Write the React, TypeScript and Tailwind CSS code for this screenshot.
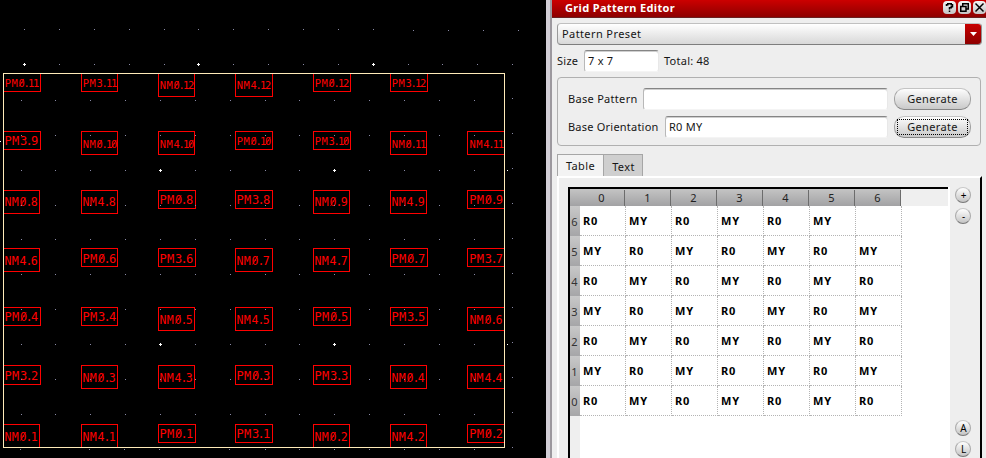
import type { ReactNode } from "react";

const COLS = [
  { left: 3, pm: 40, nm: 39 },
  { left: 81, pm: 117, nm: 117 },
  { left: 158, pm: 195, nm: 194 },
  { left: 235, pm: 272, nm: 272 },
  { left: 313, pm: 350, nm: 349 },
  { left: 390, pm: 427, nm: 426 },
  { left: 467, pm: 504, nm: 504 },
];

const DEVICE_ROWS = [
  { top: 73, pm: 91, nm: 96, pmBase: 86.5, nmBase: 88.5, names: ["PM0.11", "PM3.11", "NM0.12", "NM4.12", "PM0.12", "PM3.12"] },
  { top: 131, pm: 149, nm: 154, pmBase: 144.5, nmBase: 147.5, names: ["PM3.9", "NM0.10", "NM4.10", "PM0.10", "PM3.10", "NM0.11", "NM4.11"] },
  { top: 190, pm: 208, nm: 213, pmBase: 204, nmBase: 206, names: ["NM0.8", "NM4.8", "PM0.8", "PM3.8", "NM0.9", "NM4.9", "PM0.9"] },
  { top: 248, pm: 266, nm: 271, pmBase: 262.5, nmBase: 264.5, names: ["NM4.6", "PM0.6", "PM3.6", "NM0.7", "NM4.7", "PM0.7", "PM3.7"] },
  { top: 307, pm: 325, nm: 330, pmBase: 321, nmBase: 323.5, names: ["PM0.4", "PM3.4", "NM0.5", "NM4.5", "PM0.5", "PM3.5", "NM0.6"] },
  { top: 365, pm: 384, nm: 388, pmBase: 379.5, nmBase: 382, names: ["PM3.2", "NM0.3", "NM4.3", "PM0.3", "PM3.3", "NM0.4", "NM4.4"] },
  { top: 424, pm: 442, nm: 447, pmBase: 438, nmBase: 440.5, names: ["NM0.1", "NM4.1", "PM0.1", "PM3.1", "NM0.2", "NM4.2", "PM0.2"] },
];

// Glyph origins relative to the left edge of a device box.
const PM_OFFSETS = [1.5, 9, 16.9, 22.6, 28];
const NM_OFFSETS = [1.6, 8.8, 16.6, 22.4, 27.8];
const LONG_OFFSETS = [1.8, 8.4, 15.4, 20.4, 24.9, 29.9];

const cross = (ys: number[], xs: number[]) => ys.flatMap((y) => xs.map((x) => [x, y]));

const DOTS = [
  ...cross([29], [24, 59, 94, 129, 164, 198, 233, 268, 303, 338, 373]),
  ...cross([30], [413, 448, 483, 518]),
  ...cross([64], [59, 94, 129, 164, 233, 268, 303, 338, 408, 442, 477, 512]),
  ...cross(
    [100, 135, 170, 205, 239, 274, 309, 344, 379, 414],
    [21, 55, 90, 125, 160, 195, 230, 265, 299, 334, 369, 404, 439, 474],
  ),
  ...cross([98, 133, 168, 203, 238, 273, 307, 342, 377, 412, 447], [512]),
  ...cross([449], [20, 89, 124, 159, 229, 265, 299, 334, 369, 404, 439, 474]),
];

const CROSSES = [
  [24, 64], [198, 64], [373, 64],
  [160, 170], [334, 170], [160, 344], [334, 344],
];

function DeviceLabel({ name, x, y }: { name: string; x: number; y: number }) {
  const long = name.length === 6;
  const isPm = name.startsWith("PM");
  const offsets = long ? LONG_OFFSETS : isPm ? PM_OFFSETS : NM_OFFSETS;
  const size = long ? 10.4 : isPm ? 12 : 11.6;
  return (
    <>
      <text
        x={offsets.map((o) => x + o).join(" ")}
        y={y}
        fill="#ff0000"
        fontSize={size}
        className="font-['DejaVu_Sans_Mono',monospace]"
      >
        {name}
      </text>
      {name.split("").map((ch, i) =>
        ch === "0" ? (
          <path
            key={i}
            d={`M${x + offsets[i] + size * 0.08} ${y}L${x + offsets[i] + size * 0.53} ${y - size * 0.73}`}
            stroke="#ff0000"
            strokeWidth="0.9"
          />
        ) : null,
      )}
    </>
  );
}

function LayoutCanvas() {
  return (
    <svg width="546" height="458" viewBox="0 0 546 458" className="block shrink-0 bg-black">
      {DEVICE_ROWS.map((row) =>
        row.names.map((name, i) => {
          const isPm = name.startsWith("PM");
          const col = COLS[i];
          const right = isPm ? col.pm : col.nm;
          const bottom = isPm ? row.pm : row.nm;
          return (
            <g key={name}>
              <rect
                x={col.left + 0.5}
                y={row.top + 0.5}
                width={right - col.left}
                height={bottom - row.top}
                fill="none"
                stroke="#ff0000"
                shapeRendering="crispEdges"
              />
              <DeviceLabel name={name} x={col.left + (i === 6 ? 0.8 : 0)} y={isPm ? row.pmBase : row.nmBase} />
            </g>
          );
        }),
      )}
      <rect x="3.5" y="73.5" width="501" height="374" fill="none" stroke="#ffebb9" shapeRendering="crispEdges" />
      {DOTS.map(([x, y]) => (
        <rect key={`${x}-${y}`} x={x} y={y} width="1" height="1" fill="#8a8aa6" />
      ))}
      {CROSSES.map(([x, y]) => (
        <path key={`${x}-${y}`} d={`M${x - 1} ${y + 0.5}h3M${x + 0.5} ${y - 1}v3`} stroke="#ffffff" />
      ))}
      <path d="M507 170.5h1M507 344.5h1M0 141.5h1" stroke="#ffffff" />
    </svg>
  );
}

function TitleButton({ children }: { children: ReactNode }) {
  return (
    <span className="flex h-[13px] w-[13px] items-center justify-center rounded-[4px] bg-linear-to-b from-[#f4f4f4] to-[#c4c4c4]">
      <svg width="11" height="11" viewBox="0 0 11 11" fill="none" stroke="#000" strokeWidth="1.5">
        {children}
      </svg>
    </span>
  );
}

function Field({ value, className }: { value: string; className: string }) {
  return (
    <div
      className={`flex h-[22px] items-center rounded-[3px] border border-t-[#858585] border-r-[#e8e8e8] border-b-[#f4f4f4] border-l-[#b8b8b8] bg-white pl-[3px] shadow-[inset_0_1px_0_#cfcfcf] ${className}`}
    >
      {value}
    </div>
  );
}

function GenerateButton({ focused = false }: { focused?: boolean }) {
  return (
    <button className="relative h-[22px] w-[77px] rounded-[10px] border border-t-[#c4c4c4] border-r-[#a2a2a2] border-b-[#858585] border-l-[#a2a2a2] bg-linear-to-b from-[#fdfdfd] to-[#c9c9c9] pb-px leading-[19px] tracking-[0.35px]">
      Generate
      {focused && <span className="absolute inset-x-[2px] inset-y-[2px] border border-dotted border-black" />}
    </button>
  );
}

function RoundButton({ label }: { label: string }) {
  return (
    <button className="h-[16px] w-[16px] rounded-full border border-t-[#c8c8c8] border-r-[#aaa] border-b-[#777] border-l-[#aaa] bg-linear-to-b from-white to-[#c4c4c4] pl-px text-center text-[10px] leading-[15px] tracking-normal text-black">
      {label}
    </button>
  );
}

const TABLE_ROWS = [6, 5, 4, 3, 2, 1, 0];
const TABLE_COLS = [0, 1, 2, 3, 4, 5, 6];

function PatternTable() {
  return (
    <div className="flex h-[271px] w-[380px] flex-col border-t-2 border-l-2 border-black bg-white">
      <div className="flex h-[17px] shrink-0 bg-[#efefef]">
        <div className="w-[9px] bg-linear-to-b from-[#c4c4c4] to-[#a2a2a4]" />
        {TABLE_COLS.map((c) => (
          <div
            key={c}
            className="flex w-[46px] bg-linear-to-b from-[#c4c4c4] to-[#a2a2a4] text-center text-[#222]"
          >
            <span className="flex-1 leading-[18px]">{c}</span>
            <span className="mt-px w-px bg-[#6c6c6c]" />
          </div>
        ))}
      </div>
      <div className="flex flex-1">
        <div className="w-[10px] shrink-0 bg-[#efefef]">
          {TABLE_ROWS.map((r) => (
            <div
              key={r}
              className="flex h-[30px] flex-col bg-linear-to-b from-[#c8c8c8] to-[#a6a6a8] text-center text-[#333]"
            >
              <span className="w-[9px] flex-1 leading-[31px]">{r}</span>
              <span className="ml-[2px] h-px bg-[#707070]" />
            </div>
          ))}
        </div>
        <div>
          {TABLE_ROWS.map((r) => (
            <div key={r} className="flex h-[30px]">
              {TABLE_COLS.map((c) => (
                <div
                  key={c}
                  className="w-[46px] border-r border-b border-dotted border-[#b4b4b4] pl-[3px] text-[11px] leading-[30px] font-bold tracking-[0.9px] text-black"
                >
                  {r === 6 && c === 6 ? "" : (r + c) % 2 === 0 ? "R0" : "MY"}
                </div>
              ))}
            </div>
          ))}
        </div>
      </div>
    </div>
  );
}

function PatternEditor() {
  return (
    <div className="flex w-[434px] flex-col bg-[#eeeeee] text-[11px] tracking-[0.25px] text-[#151515]">
      <header className="flex h-[18px] shrink-0 items-start border-b border-[#6a2020] bg-linear-to-b from-[#cc0000] to-[#8e0000] pl-[13px]">
        <h1 className="flex-1 text-[11px] leading-[15px] font-bold tracking-[0.35px] text-white">Grid Pattern Editor</h1>
        <div className="flex gap-[2px] pt-px">
          <TitleButton>
            <path d="M2.500 4V2.750h1.250V1.750h3.500v1h1.250v2H7.250v1H5.500V7.500M5.500 8.500V10" />
          </TitleButton>
          <TitleButton>
            <path d="M3.750 4V1.750h5.500V7H7.500M1.750 4.500h5.250v4.750H1.750z" />
          </TitleButton>
          <TitleButton>
            <path d="M1.500 1.500l8 8M9.500 1.500l-8 8" />
          </TitleButton>
        </div>
      </header>

      <div className="flex flex-1 flex-col pl-[5px]">
        <div className="mt-[5px] flex h-[22px] w-[425px] overflow-hidden rounded-[4px] border border-t-[#c0c0c0] border-r-[#909090] border-b-[#7d7d7d] border-l-[#9a9a9a] bg-linear-to-b from-white to-[#d8d8d8]">
          <span className="flex-1 pl-[4px] leading-[20px] tracking-[0.4px]">Pattern Preset</span>
          <span className="flex w-[16px] items-center justify-center bg-linear-to-b from-[#c80000] to-[#8e0000]">
            <svg width="7" height="4" viewBox="0 0 7 4" fill="#fff">
              <path d="M0 0h7L3.500 4z" />
            </svg>
          </span>
        </div>

        <div className="mt-[5px] flex h-[22px] items-center">
          <span className="w-[27px]">Size</span>
          <Field value="7 x 7" className="w-[75px]" />
          <span className="ml-[5px]">Total: 48</span>
        </div>

        <section className="mt-[5px] flex h-[69px] w-[424px] flex-col gap-[6px] rounded-[4px] border border-[#b0b0b0] pt-[10px] pr-[9px] pl-[10px]">
          <div className="flex items-center">
            <span className="w-[75px] tracking-[0.3px]">Base Pattern</span>
            <Field value="" className="mr-[6px] flex-1" />
            <GenerateButton />
          </div>
          <div className="flex items-center">
            <span className="w-[97px] tracking-[0.22px]">Base Orientation</span>
            <Field value="R0 MY" className="mr-[6px] flex-1" />
            <GenerateButton focused />
          </div>
        </section>

        <div className="mt-[8px] flex h-[22px] tracking-[0.4px]">
          <div className="w-[47px] border border-b-0 border-[#a6a6a6] bg-[#f3f3f3] text-center leading-[22px]">Table</div>
          <div className="w-[39px] border border-b-0 border-l-0 border-[#a6a6a6] bg-[#cfcfcf] pl-px text-center leading-[24px]">
            Text
          </div>
        </div>

        <div className="flex h-[282px] w-[425px] border-t-2 border-r-2 border-l-2 border-t-white border-r-black border-l-white pt-[9px] pl-[9px]">
          <PatternTable />
          <div className="flex w-[31px] flex-col border-l-2 border-white pl-[5px]">
            <div className="flex flex-col gap-[5px]">
              <RoundButton label="+" />
              <RoundButton label="-" />
            </div>
            <div className="mt-[196px] flex flex-col gap-[5px]">
              <RoundButton label="A" />
              <RoundButton label="L" />
            </div>
          </div>
        </div>
      </div>
    </div>
  );
}

export default function App() {
  return (
    <main className="flex h-[458px] w-[986px] overflow-hidden bg-[#eeeeee] font-['Noto_Sans','Open_Sans',sans-serif]">
      <LayoutCanvas />
      <div className="w-[6px] shrink-0 border-r-2 border-[#9c989e] bg-[#d2ced6]" />
      <PatternEditor />
    </main>
  );
}
